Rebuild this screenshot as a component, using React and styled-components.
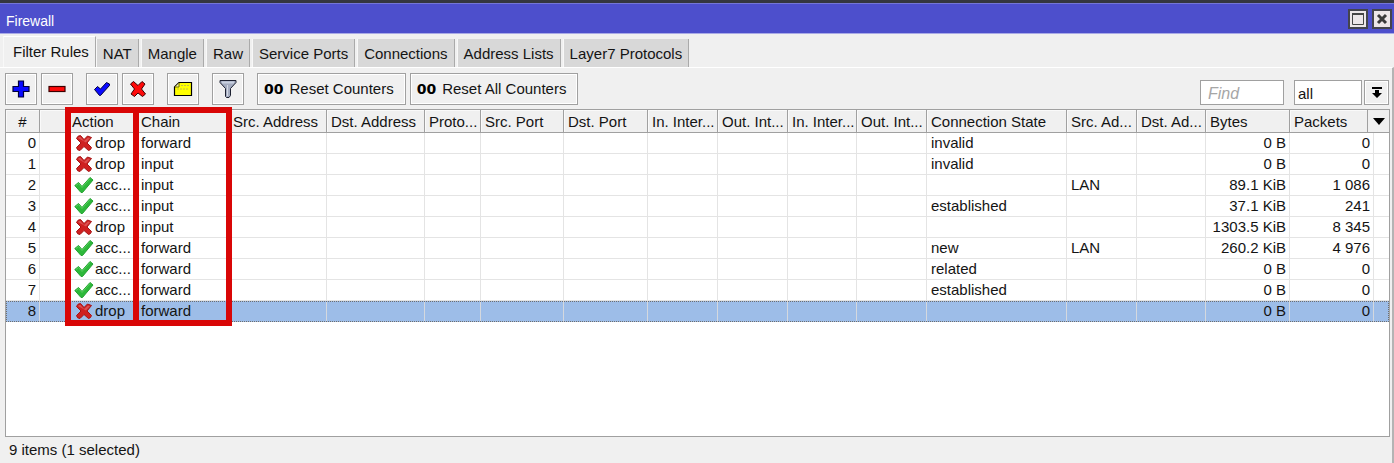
import styled, { createGlobalStyle, css } from "styled-components";

const tabs = [
  "Filter Rules",
  "NAT",
  "Mangle",
  "Raw",
  "Service Ports",
  "Connections",
  "Address Lists",
  "Layer7 Protocols",
];

const columns = [
  { key: "id", label: "#", width: 34, align: "right" },
  { key: "flags", label: "", width: 28 },
  { key: "action", label: "Action", width: 69 },
  { key: "chain", label: "Chain", width: 92 },
  { key: "srcAddress", label: "Src. Address", width: 98 },
  { key: "dstAddress", label: "Dst. Address", width: 98 },
  { key: "protocol", label: "Proto...", width: 56 },
  { key: "srcPort", label: "Src. Port", width: 83 },
  { key: "dstPort", label: "Dst. Port", width: 84 },
  { key: "inInterface", label: "In. Inter...", width: 70 },
  { key: "outInterface", label: "Out. Int...", width: 70 },
  { key: "inList", label: "In. Inter...", width: 69 },
  { key: "outList", label: "Out. Int...", width: 70 },
  { key: "state", label: "Connection State", width: 140 },
  { key: "srcList", label: "Src. Ad...", width: 70 },
  { key: "dstList", label: "Dst. Ad...", width: 69 },
  { key: "bytes", label: "Bytes", width: 84, align: "right" },
  { key: "packets", label: "Packets", width: 84, align: "right" },
];

const rules = [
  { action: "drop", chain: "forward", state: "invalid", bytes: "0 B", packets: "0" },
  { action: "drop", chain: "input", state: "invalid", bytes: "0 B", packets: "0" },
  { action: "acc...", chain: "input", srcList: "LAN", bytes: "89.1 KiB", packets: "1 086" },
  { action: "acc...", chain: "input", state: "established", bytes: "37.1 KiB", packets: "241" },
  { action: "drop", chain: "input", bytes: "1303.5 KiB", packets: "8 345" },
  { action: "acc...", chain: "forward", state: "new", srcList: "LAN", bytes: "260.2 KiB", packets: "4 976" },
  { action: "acc...", chain: "forward", state: "related", bytes: "0 B", packets: "0" },
  { action: "acc...", chain: "forward", state: "established", bytes: "0 B", packets: "0" },
  { action: "drop", chain: "forward", bytes: "0 B", packets: "0", selected: true },
];

const PlusIcon = () => (
  <svg width="18" height="18" viewBox="0 0 18 18">
    <path
      d="M6.500 1h5v5.500H17v5h-5.500V17h-5v-5.500H1v-5h5.500z"
      fill="#0a0aff"
      stroke="#00003c"
      strokeWidth="1.2"
    />
  </svg>
);

const MinusIcon = () => (
  <svg width="18" height="18" viewBox="0 0 18 18">
    <rect x="1" y="6.5" width="16" height="5" fill="#ff0a0a" stroke="#3c0000" strokeWidth="1.2" />
  </svg>
);

const EnableIcon = () => (
  <svg width="18" height="18" viewBox="0 0 18 18">
    <path
      d="M1.500 9.500l3-3 3 2.500 6-6.500 3 1.500v1.500L7.500 15.500H6.500z"
      fill="#0a0aff"
      stroke="#00003c"
      strokeLinejoin="round"
    />
  </svg>
);

const DisableIcon = () => (
  <svg width="18" height="18" viewBox="0 0 18 18">
    <path
      d="M1.500 4l3-2.500L9 5.500l4-4L16 4l-3.500 5 4 5-3 2.500L9 13l-3.500 3.500-3.500-2.500L5.500 9z"
      fill="#ff0a0a"
      stroke="#3c0000"
      strokeLinejoin="round"
    />
  </svg>
);

const NoteIcon = () => (
  <svg width="20" height="18" viewBox="0 0 20 18">
    <path d="M6 2.500h12.500v13H1.500V7z" fill="#ffff00" stroke="#000" strokeWidth="1.2" />
    <path d="M6 3v4H2" fill="#fff9a0" stroke="#6b6b00" />
    <path d="M8 5.500h8M4 9h12" stroke="#c4bc50" strokeDasharray="2 1" />
  </svg>
);

const FilterIcon = () => (
  <svg width="20" height="20" viewBox="0 0 20 20">
    <path
      d="M2 1.500h16v2l-5.500 6v7l-1.500 2H8.500l-1-1v-8L2 3.500z"
      fill="#a4acc0"
      stroke="#1c2030"
      strokeLinejoin="round"
    />
    <path d="M4 3.500h12" stroke="#c8d0e0" strokeWidth="2" />
    <path d="M9.500 6v11" stroke="#d4d9e4" />
  </svg>
);

const DropIcon = () => (
  <svg width="18" height="18" viewBox="0 0 18 18" aria-hidden="true">
    <path
      d="M1.500 4.500Q2.500 1.500 5.500 1.500L9 5.500l3.500-3.500 4 1.500-4.500 5.500 4.500 4.500q-.5 2.500-3 3L9 12.500 5 16.500q-3 0-3.500-3L6 9z"
      fill="#cf2020"
      stroke="#a51414"
      strokeLinejoin="round"
    />
    <path d="M3 4q1-1.500 2.500-1L9 7l4-3.500 2 .5-4 4.500" fill="#dc5050" />
  </svg>
);

const AcceptIcon = () => (
  <svg width="20" height="18" viewBox="0 0 20 18" aria-hidden="true">
    <path
      d="M.8 9.500L4.500 6.500l3.500 4L16 1.500l3 2.500L8.500 16.500H7z"
      fill="#2db83a"
      stroke="#24a030"
      strokeLinejoin="round"
    />
    <path d="M2 9.500l2.500-2 3.500 4 8-9" fill="none" stroke="#58d060" />
  </svg>
);

export default function App() {
  return (
    <>
      <GlobalStyle />
      <Window>
        <TitleBar>
          <Title>Firewall</Title>
          <WindowButton type="button" aria-label="Maximize">
            <svg width="16" height="16" viewBox="0 0 16 16">
              <path d="M2.500 2.500h11v11h-11z" fill="none" stroke="#444" />
              <path d="M2 3h12" stroke="#444" strokeWidth="2" />
            </svg>
          </WindowButton>
          <WindowButton type="button" aria-label="Close">
            <svg width="16" height="16" viewBox="0 0 16 16">
              <path d="M4 4l8 8M12 4l-8 8" stroke="#3a3a3a" strokeWidth="3" />
            </svg>
          </WindowButton>
        </TitleBar>
        <TabList role="tablist">
          {tabs.map((tab, index) => (
            <Tab key={tab} type="button" role="tab" aria-selected={index === 0} $active={index === 0}>
              {tab}
            </Tab>
          ))}
        </TabList>
        <Panel>
          <Toolbar>
            <ButtonGroup>
              <IconButton type="button" aria-label="Add"><PlusIcon /></IconButton>
              <IconButton type="button" aria-label="Remove"><MinusIcon /></IconButton>
            </ButtonGroup>
            <ButtonGroup>
              <IconButton type="button" aria-label="Enable"><EnableIcon /></IconButton>
              <IconButton type="button" aria-label="Disable"><DisableIcon /></IconButton>
            </ButtonGroup>
            <IconButton type="button" aria-label="Comment"><NoteIcon /></IconButton>
            <IconButton type="button" aria-label="Filter"><FilterIcon /></IconButton>
            <ButtonGroup>
              <TextButton type="button"><Zeros>00</Zeros>Reset Counters</TextButton>
              <TextButton type="button"><Zeros>00</Zeros>Reset All Counters</TextButton>
            </ButtonGroup>
            <Search>
              <FindInput type="text" placeholder="Find" aria-label="Find" />
              <ChainSelect aria-label="Chain" defaultValue="all">
                <option value="all">all</option>
              </ChainSelect>
              <DropButton type="button" aria-label="Show chains">
                <svg width="12" height="14" viewBox="0 0 12 14">
                  <path d="M1 1h10v2H1zM4 4h4v3h3l-5 5-5-5h3z" fill="#000" />
                </svg>
              </DropButton>
            </Search>
          </Toolbar>
          <TableArea>
            <Table>
              <colgroup>
                {columns.map((column) => (
                  <Column key={column.key} $width={column.width} />
                ))}
                <col />
              </colgroup>
              <thead>
                <tr>
                  {columns.map((column) => (
                    <HeadCell key={column.key} scope="col" $center={column.key === "id"}>
                      {column.label}
                    </HeadCell>
                  ))}
                  <HeadCell scope="col">
                    <ColumnsButton type="button" aria-label="Columns">
                      <svg width="14" height="8" viewBox="0 0 14 8">
                        <path d="M1 1h12L7 8z" fill="#000" />
                      </svg>
                    </ColumnsButton>
                  </HeadCell>
                </tr>
              </thead>
              <tbody>
                {rules.map((rule, index) => (
                  <Row key={index} $selected={rule.selected}>
                    {columns.map(({ key, align }) => (
                      <Cell key={key} $align={align}>
                        {key === "id" && index}
                        {key === "action" ? (
                          <Action>
                            <ActionIcon>
                              {rule.action === "drop" ? <DropIcon /> : <AcceptIcon />}
                            </ActionIcon>
                            {rule.action}
                          </Action>
                        ) : (
                          rule[key]
                        )}
                      </Cell>
                    ))}
                    <Cell />
                  </Row>
                ))}
              </tbody>
            </Table>
            <Highlight>
              <HighlightBox />
              <HighlightBox $wide />
            </Highlight>
          </TableArea>
          <StatusBar>9 items (1 selected)</StatusBar>
        </Panel>
      </Window>
    </>
  );
}

const GlobalStyle = createGlobalStyle`
  * {
    box-sizing: border-box;
  }

  body {
    margin: 0;
    background: #f0f0f0;
  }

  body, button, input, select {
    font-family: "Liberation Sans", Arial, sans-serif;
    font-size: 15px;
    color: #141414;
  }

  svg {
    display: block;
    flex: none;
  }
`;

const Window = styled.div`
  display: flex;
  flex-direction: column;
  min-height: 100vh;
  border-top: 3px solid #34363f;
  background: #f0f0f0;
`;

const TitleBar = styled.header`
  display: flex;
  align-items: center;
  gap: 4px;
  height: 31px;
  padding: 0 2px 0 6px;
  border-top: 1px solid #7476d6;
  border-bottom: 1px solid #a9aae6;
  background: #4d4fcc;
`;

const Title = styled.h1`
  flex: 1;
  margin: 4px 0 0;
  font-size: 14px;
  font-weight: normal;
  color: #fff;
`;

const WindowButton = styled.button`
  display: flex;
  align-items: center;
  justify-content: center;
  width: 20px;
  height: 20px;
  padding: 0;
  border: 2px solid #44444c;
  background: #ece6e8;
`;

const TabList = styled.nav`
  display: flex;
  align-items: flex-end;
  gap: 2px;
  height: 33px;
  padding-left: 3px;
`;

const Tab = styled.button`
  height: 28px;
  padding: 1px 6px 0;
  border: 0;
  border-right: 1px solid #aaa;
  border-left: 1px solid #f8f8f8;
  background: #d8d8d8;
  white-space: nowrap;

  ${({ $active }) =>
    $active &&
    css`
      height: 31px;
      margin-right: -2px;
      padding: 0 6px 2px 9px;
      border-top: 1px solid #fff;
      background: #f0f0f0;
    `}
`;

const Panel = styled.main`
  display: flex;
  flex: 1;
  flex-direction: column;
  padding: 0 2px 0 5px;
  border-top: 1px solid #fff;
  border-right: 2px solid #b4b4b4;
`;

const Toolbar = styled.div`
  display: flex;
  align-items: center;
  gap: 13px;
  height: 41px;
`;

const ButtonGroup = styled.div`
  display: flex;
  gap: 4px;
`;

const ToolButton = styled.button`
  display: flex;
  align-items: center;
  justify-content: center;
  height: 32px;
  padding: 0;
  border: 1px solid #a0a0a0;
  background: #f0f0f0;
  box-shadow: inset 0 0 0 1px #fff;
  white-space: nowrap;
`;

const IconButton = styled(ToolButton)`
  width: 32px;
`;

const TextButton = styled(ToolButton)`
  gap: 6px;
  padding: 0 11px 0 6px;
`;

const Zeros = styled.span`
  font-family: "DejaVu Sans", sans-serif;
  font-size: 14px;
  font-weight: bold;
  color: #000;
`;

const Search = styled.div`
  display: flex;
  align-self: flex-end;
  gap: 2px;
  margin: 0 1px 4px auto;
`;

const field = css`
  height: 25px;
  border: 1px solid #a0a0a0;
  border-radius: 0;
  background: #fff;
`;

const FindInput = styled.input`
  ${field}
  width: 84px;
  margin-right: 8px;
  padding: 1px 7px 0;

  &::placeholder {
    color: #a6a6a6;
    font-size: 16px;
    font-style: italic;
  }
`;

const ChainSelect = styled.select`
  ${field}
  width: 68px;
  padding: 1px 3px 0;
  appearance: none;
`;

const DropButton = styled.button`
  ${field}
  display: flex;
  align-items: center;
  justify-content: center;
  width: 25px;
  padding: 0;
  background: #f0f0f0;
  box-shadow: inset 0 0 0 1px #fff;
`;

const TableArea = styled.div`
  position: relative;
  flex: 1;
  border: 1px solid #a0a0a0;
  background: #fff;
`;

const Table = styled.table`
  width: 100%;
  table-layout: fixed;
  border-collapse: separate;
  border-spacing: 0;
`;

const Column = styled.col`
  width: ${({ $width }) => $width}px;
`;

const HeadCell = styled.th`
  position: relative;
  height: 23px;
  padding: 2px 0 0 ${({ $center }) => ($center ? 0 : 4)}px;
  border-right: 1px solid #a0a0a0;
  border-bottom: 1px solid #a0a0a0;
  background: #f0f0f0;
  box-shadow: inset 1px 1px 0 #fafafa;
  font-weight: normal;
  line-height: 20px;
  text-align: ${({ $center }) => ($center ? "center" : "left")};
  white-space: nowrap;

  &:last-child {
    border-right: 0;
  }
`;

/* wider than the last column, so it lies over the end of Packets */
const ColumnsButton = styled.button`
  position: absolute;
  top: 0;
  right: 0;
  display: flex;
  align-items: center;
  justify-content: center;
  width: 22px;
  height: 22px;
  padding: 0;
  border: 0;
  border-left: 1px solid #a0a0a0;
  background: #f0f0f0;
`;

const Cell = styled.td`
  height: 21px;
  padding: 0 3px 0 4px;
  border-right: 1px solid #e4e4e4;
  border-bottom: 1px solid #e4e4e4;
  line-height: 20px;
  text-align: ${({ $align }) => $align || "left"};
  white-space: nowrap;

  &:last-child {
    border-right: 0;
  }
`;

const Row = styled.tr`
  ${({ $selected }) =>
    $selected &&
    css`
      background: #9dbde8;
      outline: 1px dotted #6e6e6e;
      outline-offset: -1px;

      ${Cell} {
        border-right-color: #d4d8de;
        border-bottom-color: #9dbde8;
      }
    `}
`;

const Action = styled.span`
  display: flex;
  align-items: center;
  gap: 1px;
  padding-left: 2px;
`;

const ActionIcon = styled.span`
  display: flex;
  justify-content: center;
  width: 20px;
`;

const Highlight = styled.div`
  position: absolute;
  top: -3px;
  left: 59px;
  display: flex;
  height: 219px;
  pointer-events: none;
`;

const HighlightBox = styled.div`
  width: ${({ $wide }) => ($wide ? 99 : 74)}px;
  border: 6px solid #d90606;

  & + & {
    margin-left: -6px;
  }
`;

const StatusBar = styled.footer`
  height: 26px;
  padding-left: 4px;
  line-height: 26px;
`;
